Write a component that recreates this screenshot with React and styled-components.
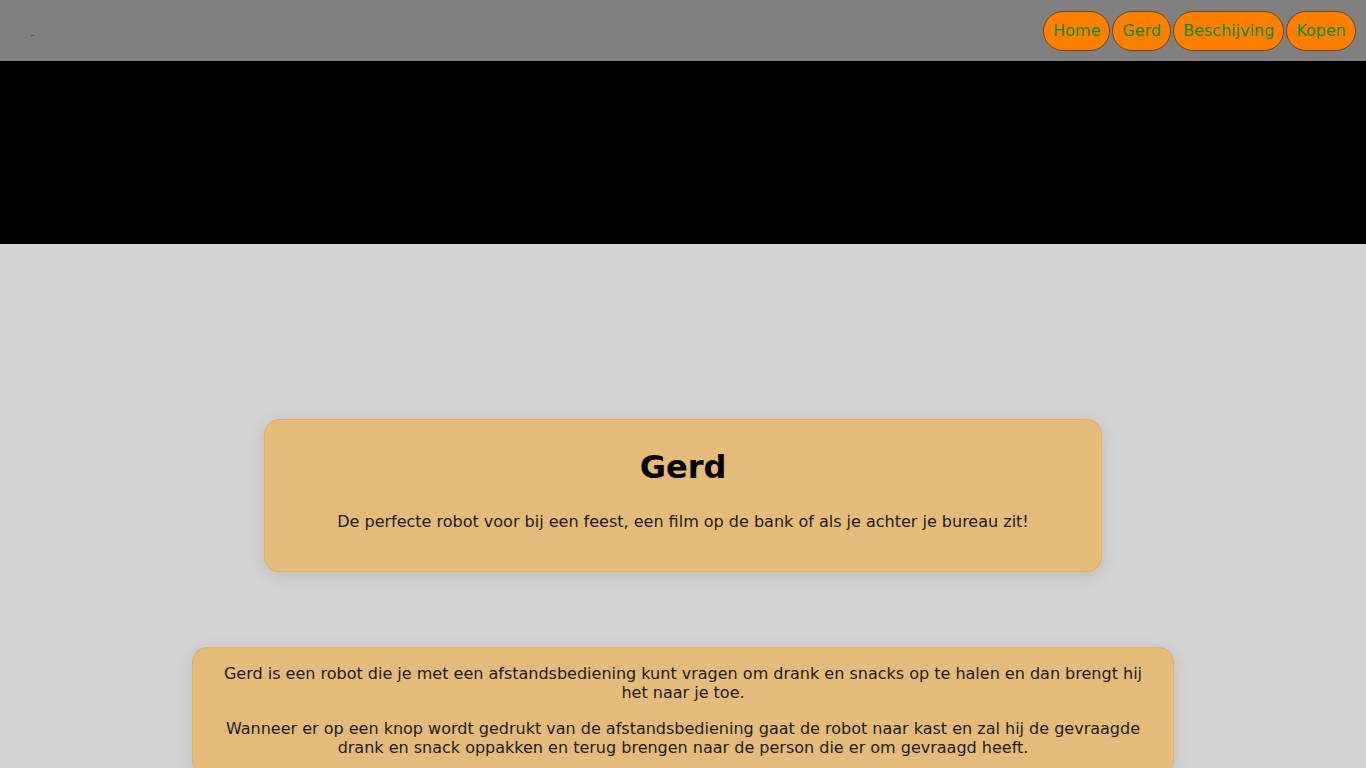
import React from 'react';
import styled, { createGlobalStyle } from 'styled-components';

// ─────────────────────────────────────────────────────────────────────────────
// Global
// ─────────────────────────────────────────────────────────────────────────────

const GlobalStyle = createGlobalStyle`
  body {
    margin: 0;
    background: #d3d3d3;
    font-family: Verdana, "DejaVu Sans", sans-serif;
    color: #1c1c1c;
  }
`;

// ─────────────────────────────────────────────────────────────────────────────
// Component
// ─────────────────────────────────────────────────────────────────────────────

const links = ['Home', 'Gerd', 'Beschijving', 'Kopen'];

const App = () => (
  <>
    <GlobalStyle />
    <Header>
      <Logo />
      <Nav>
        {links.map((label) => (
          <NavButton key={label}>{label}</NavButton>
        ))}
      </Nav>
    </Header>
    <Banner />
    <Main>
      <IntroCard>
        <Title>Gerd</Title>
        <Text>De perfecte robot voor bij een feest, een film op de bank of als je achter je bureau zit!</Text>
      </IntroCard>
      <InfoCard>
        <Text>
          Gerd is een robot die je met een afstandsbediening kunt vragen om drank en snacks op te halen en dan brengt hij
          het naar je toe.
        </Text>
        <Text>
          Wanneer er op een knop wordt gedrukt van de afstandsbediening gaat de robot naar kast en zal hij de gevraagde
          drank en snack oppakken en terug brengen naar de person die er om gevraagd heeft.
        </Text>
      </InfoCard>
    </Main>
  </>
);

// ─────────────────────────────────────────────────────────────────────────────
// Styles
// ─────────────────────────────────────────────────────────────────────────────

const Header = styled.header`
  display: flex;
  align-items: center;
  justify-content: space-between;
  height: 61px;
  padding: 0 10px 0 31px;
  box-sizing: border-box;
  background: #808080;
`;

const Logo = styled.span`
  display: block;
  width: 3px;
  height: 1px;
  margin-top: 10px;
  background: #555;
`;

const Nav = styled.nav`
  display: flex;
  gap: 2px;
`;

const NavButton = styled.button`
  height: 40px;
  padding: 0 9px;
  border: 1px solid #7a4500;
  border-radius: 20px;
  background: #ff8000;
  color: #0a8a0a;
  font-family: Verdana, "DejaVu Sans", sans-serif;
  font-size: 16px;
  cursor: pointer;
`;

const Banner = styled.div`
  height: 183px;
  background: #000;
`;

const Main = styled.main`
  display: flex;
  flex-direction: column;
  align-items: center;
  padding-top: 175px;
`;

const Card = styled.section`
  box-sizing: border-box;
  background: #e4bb78;
  border: 1px solid #e8ad55;
  border-radius: 15px;
  box-shadow: 0 4px 16px rgba(0, 0, 0, 0.12);
  text-align: center;
`;

const IntroCard = styled(Card)`
  width: 838px;
  padding: 7px 20px 23px;
`;

const InfoCard = styled(Card)`
  width: 982px;
  margin-top: 75px;
  padding: 0 24px;
`;

const Title = styled.h1`
  margin: 21px 0 26px;
  font-size: 32px;
  color: #000;
`;

const Text = styled.p`
  margin: 16px 0;
  font-size: 16px;
  line-height: 19.5px;
  ${Title} + & {
    margin-top: 0;
  }
`;

export default App;
